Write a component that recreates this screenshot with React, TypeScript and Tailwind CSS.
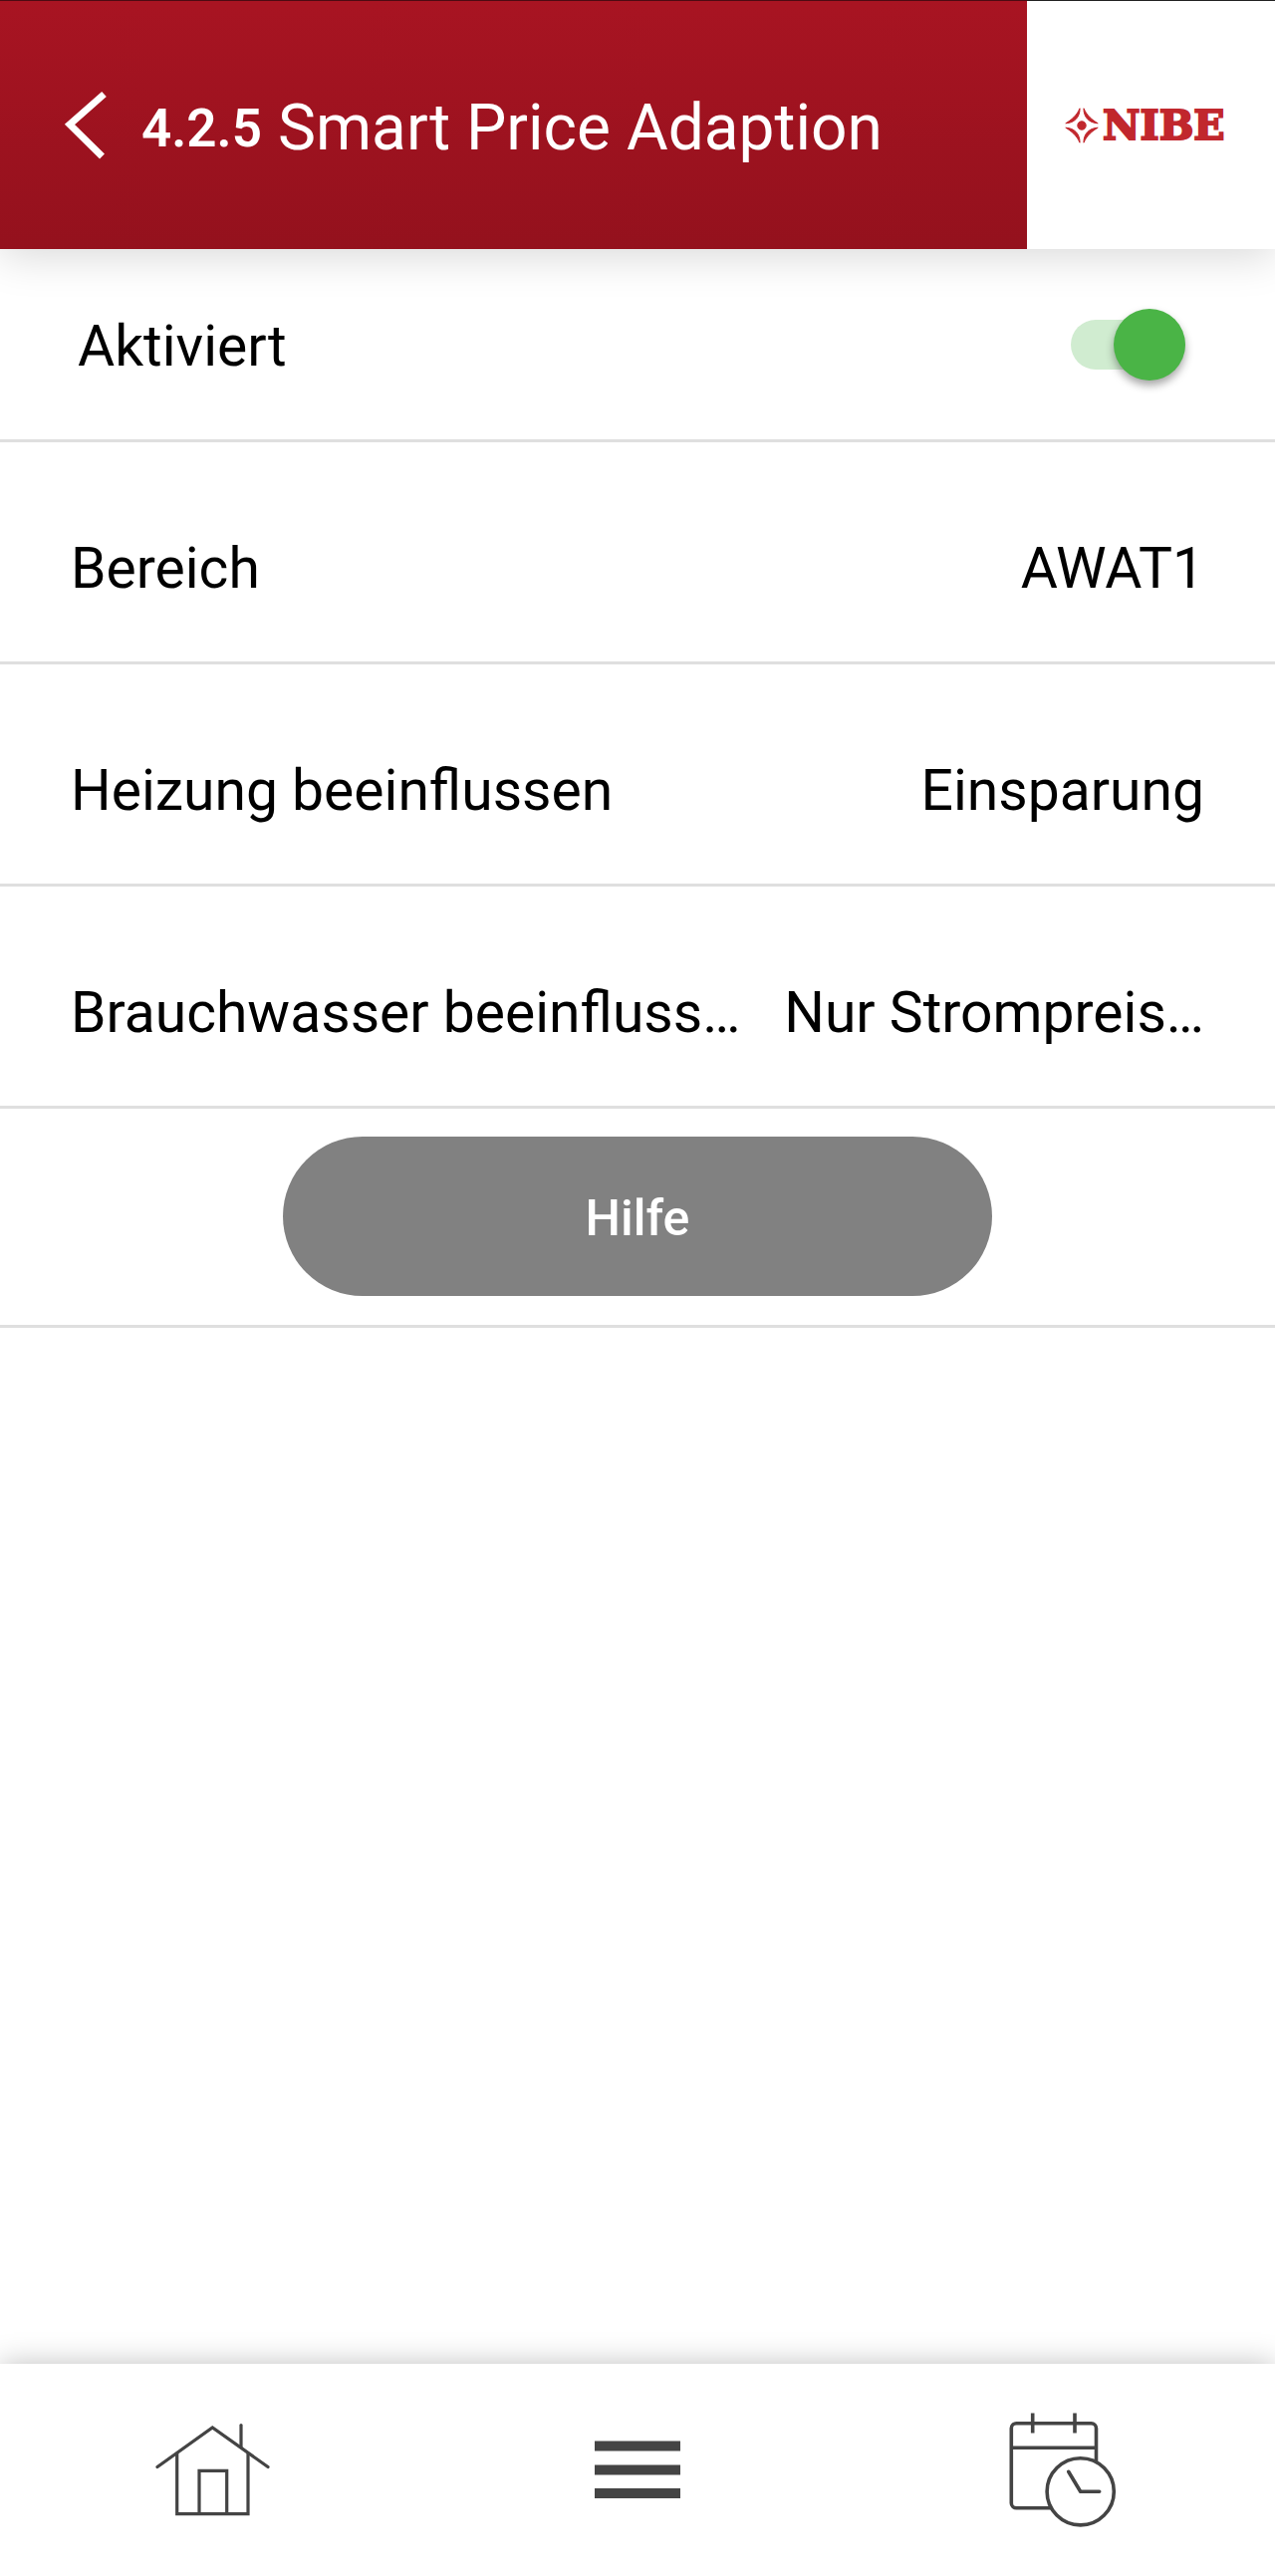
import { useState } from "react";

const settings = [
  { label: "Bereich", value: "AWAT1" },
  { label: "Heizung beeinflussen", value: "Einsparung" },
  { label: "Brauchwasser beeinfluss…", value: "Nur Strompreis…" },
];

function NibeLogo() {
  return (
    <div className="flex items-center gap-1 text-[#c1272d]">
      <svg width="34" height="36" viewBox="0 0 34 36" fill="currentColor" stroke="currentColor" aria-hidden="true">
        <circle cx="17" cy="18" r="4.2" />
        <path d="M15 0.8 C15.4 9 10 15.4 0.8 15.8 C6.5 12.5 12 8 15 0.8Z" />
        <path d="M19 0.8 C18.6 9 24 15.4 33.2 15.8 C27.5 12.5 22 8 19 0.8Z" />
        <path d="M15 35.2 C15.4 27 10 20.6 0.8 20.2 C6.5 23.5 12 28 15 35.2Z" />
        <path d="M19 35.2 C18.6 27 24 20.6 33.2 20.2 C27.5 23.5 22 28 19 35.2Z" />
      </svg>
      <span className="font-['DejaVu_Serif',serif] text-[41px] leading-[38px] font-bold [-webkit-text-stroke:2px_#c1272d]">
        NIBE
      </span>
    </div>
  );
}

function HomeIcon() {
  return (
    <svg width="120" height="120" viewBox="0 0 120 120" fill="none" stroke="#444" strokeWidth="3.2" strokeLinecap="round">
      <path d="M5 56.5 L60.3 17 L116 56.5" />
      <path d="M89 14.5 V36.5" />
      <path d="M24.7 43 V103.7 H96 V43" strokeLinecap="butt" />
      <path d="M47 103.7 V60.3 H74.7 V103.7" strokeLinecap="butt" />
    </svg>
  );
}

function MenuIcon() {
  return (
    <svg width="120" height="120" viewBox="0 0 120 120" fill="#444">
      <rect x="17" y="30.5" width="86" height="10" />
      <rect x="17" y="54.5" width="86" height="10" />
      <rect x="17" y="78" width="86" height="10" />
    </svg>
  );
}

function ScheduleIcon() {
  return (
    <svg width="120" height="120" viewBox="0 0 120 120" fill="none" stroke="#444" strokeWidth="3.6">
      <path d="M93.5 51.5 V17.7 A5 5 0 0 0 88.5 12.7 H13.3 A5 5 0 0 0 8.3 17.7 V92.7 A5 5 0 0 0 13.3 97.7 H48" />
      <path d="M8.3 37.3 H93.5" />
      <path d="M29.7 2.5 V22.5 M72 2.5 V22.5" />
      <circle cx="77.7" cy="81.3" r="33.6" />
      <path d="M65.7 61.3 L77.7 81.3 H96.7" strokeLinecap="round" strokeLinejoin="round" />
    </svg>
  );
}

export default function App() {
  const [enabled, setEnabled] = useState(true);

  return (
    <div className="flex min-h-screen flex-col bg-white font-[Roboto,sans-serif] text-black">
      {/* Header */}
      <header className="relative z-10 flex h-[250px] shadow-[0_8px_40px_rgba(0,0,0,0.15)]">
        <div className="flex min-w-0 flex-1 items-center border-t border-[#4d0a12] bg-linear-to-b from-[#a81422] to-[#94111d] pl-[62px] text-white">
          <button type="button" aria-label="Zurück" className="mr-8">
            <svg width="48" height="72" viewBox="0 0 48 72" fill="none" stroke="white" strokeWidth="7">
              <path d="M42.5 4.5 L8 35 L40.5 67" />
            </svg>
          </button>
          <h1 className="flex items-center gap-4 pt-1.5 whitespace-nowrap">
            <span className="text-[53px] leading-[80px] font-semibold">4.2.5</span>
            <span className="text-[64px] leading-[80px] font-normal">Smart Price Adaption</span>
          </h1>
        </div>
        <div className="flex w-[249px] items-center border-t border-[#222] bg-white pl-[38px]">
          <NibeLogo />
        </div>
      </header>

      {/* Settings */}
      <main className="flex-1 text-[57px] leading-[68px]">
        <label className="flex cursor-pointer items-end justify-between border-b-3 border-[#dfdfdf] pt-[60px] pr-[90px] pb-[59px] pl-[78px]">
          <span>Aktiviert</span>
          <span className="relative flex h-[72px] w-[115px] items-center">
            <input
              type="checkbox"
              role="switch"
              checked={enabled}
              onChange={(e) => setEnabled(e.target.checked)}
              className="peer absolute inset-0 h-full w-full cursor-pointer opacity-0"
            />
            <span className="pointer-events-none h-[50px] w-full rounded-full bg-gray-300 peer-checked:bg-[#d0ecd0]" />
            <span className="pointer-events-none absolute left-0 h-[72px] w-[72px] rounded-full bg-gray-50 shadow-[0_5px_8px_rgba(0,0,0,0.35)] transition-all peer-checked:left-[43px] peer-checked:bg-[#4ab446]" />
          </span>
        </label>

        {settings.map((s) => (
          <button
            key={s.label}
            type="button"
            className="flex w-full items-center justify-between border-b-3 border-[#dfdfdf] px-[71px] pt-[93px] pb-[59px] text-left"
          >
            <span>{s.label}</span>
            <span>{s.value}</span>
          </button>
        ))}

        <div className="flex justify-center border-b-3 border-[#dfdfdf] pt-[28px] pb-[29px]">
          <button type="button" className="h-[160px] w-[712px] rounded-full bg-[#818181] pt-1 text-[50px] font-medium text-white">
            Hilfe
          </button>
        </div>
      </main>

      {/* Bottom navigation */}
      <nav className="grid h-[213px] grid-cols-3 place-items-center bg-white shadow-[0_0_28px_rgba(0,0,0,0.25)]">
        <a href="#home" aria-label="Start">
          <HomeIcon />
        </a>
        <a href="#menu" aria-label="Menü">
          <MenuIcon />
        </a>
        <a href="#schedule" aria-label="Zeitplan">
          <ScheduleIcon />
        </a>
      </nav>
    </div>
  );
}
